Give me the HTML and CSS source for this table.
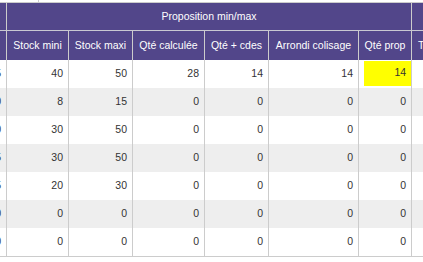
FILE: index.html
```html
<!DOCTYPE html>
<html lang="fr">
<head>
<meta charset="utf-8">
<title>Proposition min/max</title>
<link rel="stylesheet" href="styles.css">
</head>
<body>
<div class="viewport">
  <div class="topbar"><div class="topbar-sep"></div></div>
  <table class="grid">
    <colgroup>
      <col class="c-prev">
      <col class="c-mini">
      <col class="c-maxi">
      <col class="c-calc">
      <col class="c-cdes">
      <col class="c-arr">
      <col class="c-prop">
      <col class="c-next">
    </colgroup>
    <thead>
      <tr class="h1">
        <th></th>
        <th colspan="6">Proposition min/max</th>
        <th></th>
      </tr>
      <tr class="h2">
        <th></th>
        <th>Stock mini</th>
        <th>Stock maxi</th>
        <th>Qté calculée</th>
        <th>Qté + cdes</th>
        <th>Arrondi colisage</th>
        <th>Qté prop</th>
        <th class="left">Total</th>
      </tr>
    </thead>
    <tbody>
      <tr>
        <td>15</td><td>40</td><td>50</td><td>28</td><td>14</td><td>14</td>
        <td class="hl-cell"><div class="hl">14</div></td><td></td>
      </tr>
      <tr class="alt">
        <td>10</td><td>8</td><td>15</td><td>0</td><td>0</td><td>0</td><td>0</td><td></td>
      </tr>
      <tr>
        <td>10</td><td>30</td><td>50</td><td>0</td><td>0</td><td>0</td><td>0</td><td></td>
      </tr>
      <tr class="alt">
        <td>15</td><td>30</td><td>50</td><td>0</td><td>0</td><td>0</td><td>0</td><td></td>
      </tr>
      <tr>
        <td>15</td><td>20</td><td>30</td><td>0</td><td>0</td><td>0</td><td>0</td><td></td>
      </tr>
      <tr class="alt">
        <td>10</td><td>0</td><td>0</td><td>0</td><td>0</td><td>0</td><td>0</td><td></td>
      </tr>
      <tr class="last">
        <td>10</td><td>0</td><td>0</td><td>0</td><td>0</td><td>0</td><td>0</td><td></td>
      </tr>
    </tbody>
  </table>
</div>
</body>
</html>
```
FILE: styles.css
```css
html, body {
  margin: 0;
  padding: 0;
  background: #ffffff;
}

.viewport {
  width: 423px;
  height: 262px;
  overflow: hidden;
  font-family: "Liberation Sans", Arial, sans-serif;
  font-size: 10.5px;
}

.topbar {
  height: 2px;
  border-bottom: 1px solid #cccccc;
  display: flex;
}

.topbar-sep {
  margin-left: 38px;
  width: 1px;
  background: #cccccc;
}

.grid {
  border-collapse: separate;
  border-spacing: 0;
  table-layout: fixed;
  width: 545px;
  margin-left: -43px;
}

.c-prev { width: 50px; }
.c-mini { width: 62px; }
.c-maxi { width: 64px; }
.c-calc { width: 72px; }
.c-cdes { width: 64px; }
.c-arr  { width: 90px; }
.c-prop { width: 53px; }
.c-next { width: 90px; }

.grid th,
.grid td {
  box-sizing: border-box;
  border-right: 1px solid #cccccc;
  white-space: nowrap;
  overflow: hidden;
}

.grid th {
  background: #52468a;
  color: #ffffff;
  font-weight: normal;
  text-align: center;
  padding: 0 4px;
  line-height: 12px;
}

.h1 th {
  height: 28px;
  border-bottom: 1px solid #c9c9d2;
  padding-bottom: 1px;
}

.h2 th {
  height: 29px;
  padding-bottom: 2px;
}

.grid th.left {
  text-align: left;
  padding-left: 6px;
}

.grid td {
  height: 28px;
  padding: 0 5px 3px 0;
  text-align: right;
  color: #333333;
  line-height: 12px;
  background: #ffffff;
}

.grid tr.alt td {
  background: #eeeeee;
}

.grid tr.last td {
  height: 29px;
  border-bottom: 1px solid #cccccc;
}

.grid td.hl-cell {
  padding: 0;
  vertical-align: top;
}

.hl {
  margin: 1px 0 2px 5px;
  height: 25px;
  line-height: 23px;
  padding-right: 5px;
  background: #ffff00;
  text-align: right;
}
```
